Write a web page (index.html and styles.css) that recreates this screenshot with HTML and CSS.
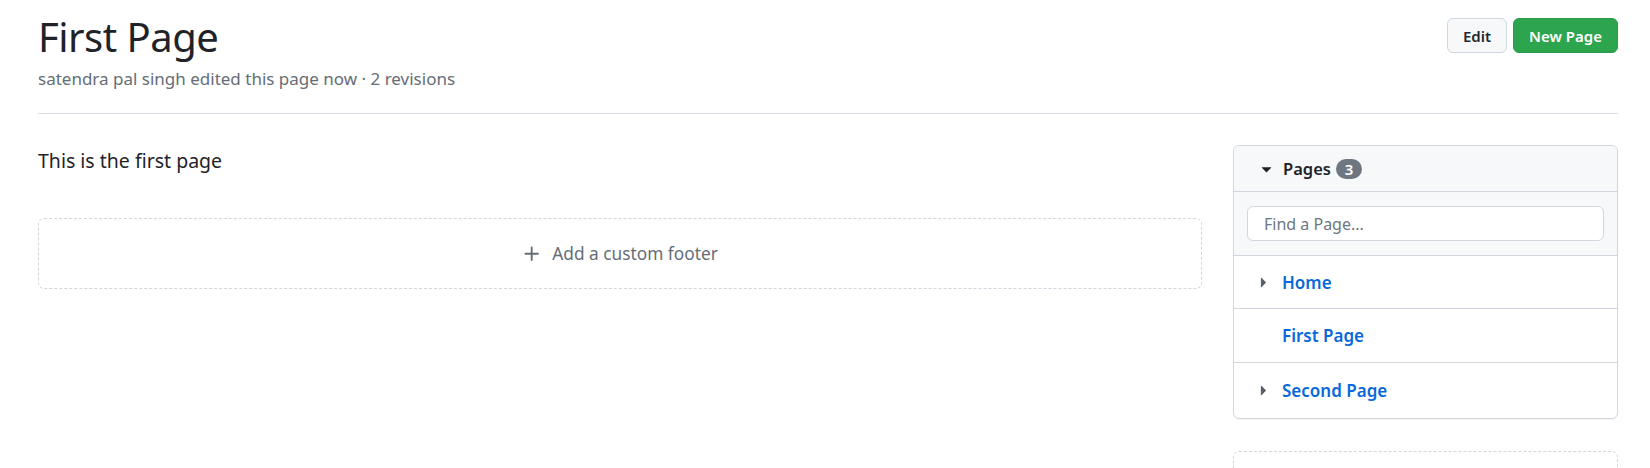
FILE: index.html
```html
<!DOCTYPE html>
<html lang="en">
<head>
<meta charset="utf-8">
<title>First Page</title>
<link rel="stylesheet" href="styles.css">
</head>
<body>
<div class="container">
  <header class="page-head">
    <div class="title-block">
      <h1 class="title">First Page</h1>
      <div class="meta">satendra pal singh edited this page now · 2 revisions</div>
    </div>
    <div class="actions">
      <button class="btn btn-edit">Edit</button>
      <button class="btn btn-new">New Page</button>
    </div>
  </header>
  <div class="layout">
    <main class="content">
      <p class="body-text">This is the first page</p>
      <div class="footer-box">
        <svg class="plus" viewBox="0 0 16 16" width="20" height="20"><path d="M7.75 2a.75.75 0 0 1 .75.75V7h4.25a.75.75 0 0 1 0 1.5H8.5v4.25a.75.75 0 0 1-1.5 0V8.5H2.75a.75.75 0 0 1 0-1.5H7V2.75A.75.75 0 0 1 7.75 2Z"/></svg>
        <span>Add a custom footer</span>
      </div>
    </main>
    <aside class="sidebar">
      <div class="pages-box">
        <div class="pages-head">
          <svg class="caret" viewBox="0 0 16 16" width="21" height="21"><path d="m4.427 7.427 3.396 3.396a.25.25 0 0 0 .354 0l3.396-3.396A.25.25 0 0 0 11.396 7H4.604a.25.25 0 0 0-.177.427Z"/></svg>
          <span class="pages-label">Pages</span>
          <span class="counter">3</span>
        </div>
        <div class="search-row">
          <div class="search-input">Find a Page...</div>
        </div>
        <div class="page-row row-a">
          <svg class="caret caret-right" viewBox="0 0 16 16" width="21" height="21"><path d="m6.427 4.427 3.396 3.396a.25.25 0 0 1 0 .354l-3.396 3.396A.25.25 0 0 1 6 11.396V4.604a.25.25 0 0 1 .427-.177Z"/></svg>
          <a class="page-link">Home</a>
        </div>
        <div class="page-row row-b">
          <span class="caret-spacer"></span>
          <a class="page-link">First Page</a>
        </div>
        <div class="page-row row-c">
          <svg class="caret caret-right" viewBox="0 0 16 16" width="21" height="21"><path d="m6.427 4.427 3.396 3.396a.25.25 0 0 1 0 .354l-3.396 3.396A.25.25 0 0 1 6 11.396V4.604a.25.25 0 0 1 .427-.177Z"/></svg>
          <a class="page-link">Second Page</a>
        </div>
      </div>
      <div class="sidebar-dashed"></div>
    </aside>
  </div>
</div>
</body>
</html>
```
FILE: styles.css
```css
* { box-sizing: border-box; }
html, body { margin: 0; padding: 0; background: #ffffff; }
body {
  font-family: "Noto Sans", "Open Sans", sans-serif;
  color: #1f2328;
  overflow: hidden;
}
.container {
  width: 1580px;
  margin-left: 38px;
}
.page-head {
  display: flex;
  justify-content: space-between;
  align-items: flex-start;
  border-bottom: 1px solid #d8dee4;
  padding-bottom: 22px;
}
.title-block { padding-top: 11px; }
.title {
  margin: 0;
  font-size: 40px;
  font-weight: 400;
  line-height: 52px;
  color: #1f2328;
  letter-spacing: -0.5px;
}
.meta {
  font-size: 17px;
  line-height: 24px;
  color: #656d76;
  margin-top: 4px;
}
.actions {
  display: flex;
  gap: 6px;
  padding-top: 18px;
}
.btn {
  font-family: inherit;
  height: 35px;
  border-radius: 6px;
  font-size: 15px;
  font-weight: 600;
  cursor: pointer;
}
.btn-edit {
  width: 60px;
  padding: 0;
  background: #f6f8fa;
  border: 1px solid #d0d7de;
  color: #24292f;
}
.btn-new {
  width: 105px;
  padding: 0;
  background: #2da44e;
  border: 1px solid #2a9c4a;
  color: #ffffff;
}
.layout {
  display: flex;
  gap: 31px;
  margin-top: 31px;
  align-items: flex-start;
}
.content { flex: 1; min-width: 0; }
.body-text {
  margin: 0;
  font-size: 19.5px;
  line-height: 32px;
  color: #1f2328;
}
.footer-box {
  margin-top: 41px;
  height: 71px;
  border: 1px dashed #d0d7de;
  border-radius: 6px;
  display: flex;
  align-items: center;
  justify-content: center;
  gap: 10px;
  color: #656d76;
  font-size: 17.3px;
}
.plus { fill: #656d76; }
.sidebar {
  width: 385px;
  flex: none;
}
.pages-box {
  border: 1px solid #d0d7de;
  border-radius: 6px;
  overflow: hidden;
  box-shadow: 0 1px 0 rgba(31,35,40,0.04);
}
.pages-head {
  height: 46px;
  background: #f6f8fa;
  border-bottom: 1px solid #d0d7de;
  display: flex;
  align-items: center;
  padding-left: 22px;
}
.caret { fill: #1f2328; flex: none; }
.pages-label {
  font-size: 16.5px;
  font-weight: 600;
  margin-left: 6px;
}
.counter {
  margin-left: 5px;
  background: #6e7781;
  color: #ffffff;
  font-size: 15px;
  font-weight: 600;
  min-width: 26px;
  height: 20px;
  line-height: 20px;
  border-radius: 10px;
  text-align: center;
}
.search-row {
  background: #f6f8fa;
  border-bottom: 1px solid #d0d7de;
  padding: 14px 13px 14px;
}
.search-input {
  height: 35px;
  background: #ffffff;
  border: 1px solid #d0d7de;
  border-radius: 6px;
  padding-left: 16px;
  display: flex;
  align-items: center;
  font-size: 16px;
  color: #6e7781;
}
.page-row {
  display: flex;
  align-items: center;
  padding-left: 19px;
  border-bottom: 1px solid #d0d7de;
}
.row-a { height: 53px; }
.row-b { height: 54px; }
.row-c { height: 55px; border-bottom: none; }
.caret-right { fill: #57606a; }
.caret-spacer { width: 21px; flex: none; }
.page-link {
  margin-left: 8px;
  font-size: 17px;
  font-weight: 600;
  color: #0969da;
  text-decoration: none;
}
.sidebar-dashed {
  margin-top: 32px;
  height: 60px;
  border: 1px dashed #d0d7de;
  border-radius: 6px;
}
```
